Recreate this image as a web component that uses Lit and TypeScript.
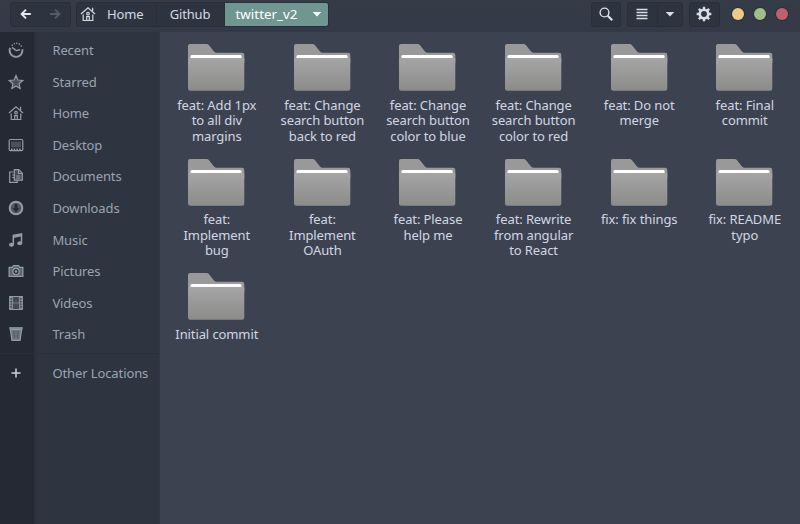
import { LitElement, html, svg, css } from "lit";
import { customElement, property } from "lit/decorators.js";

const house = svg`<path d="M1 8 8 1.8 15 8M3.2 8.6v5.9h9.6V8.6M12.6 5V1.8" /><path d="M6.7 14V10.6h2.6V14" /><circle cx="8" cy="7.7" r="1.3" />`;

const glyphs: Record<string, unknown> = {
  recent: svg`<path d="M2.2 5.8a6.4 6.4 0 1 0 12.1 1.4" stroke-width="1.9" /><path d="M4 5.4 8.2 8.6 12 7.8" stroke-width="1.4" /><path d="M4.3 3.2v.1M6.3 1.7v.1M8.8 1.2v.1M11.300 2v.1M13.2 4v.1" stroke-width="1.6" stroke-linecap="round" />`,
  starred: svg`<path d="M8 1.6 9.9 6l4.8.5-3.6 3.2 1 4.8L8 12l-4.1 2.5 1-4.8L1.3 6.5 6.1 6z" fill="currentColor" fill-opacity=".35" />`,
  home: house,
  desktop: svg`<rect x="1.2" y="2.5" width="13.6" height="11.2" rx="1.2" /><path d="M3 4.5h10v5.8H3z" fill="currentColor" stroke="none" opacity=".35" /><path d="M3 12.2h10" stroke-dasharray="1.5 1.2" stroke-width="1.5" />`,
  documents: svg`<path d="M5.5 4H1.7v10.3h7.6v-2M4.2 7h2.6M4.2 9.5h2.6" /><path d="M6.3 1.7h4.5l3.5 3.5v7H6.3z" fill="currentColor" fill-opacity=".3" /><path d="M10.5 1.7v3.8h3.8M8.2 8h4M8.2 10h4" />`,
  downloads: svg`<circle cx="8" cy="8" r="6.3" stroke-width="2" fill="currentColor" fill-opacity=".4" /><path d="M6.6 4h2.8v4h2.2L8 12.2 4.4 8h2.2z" fill="#242a34" stroke="none" />`,
  music: svg`<path d="M5.3 12.5V3.3l8.2-1.5v9" stroke-width="1.5" /><path d="M5 3.8 14 2v2.3L5 6z" fill="currentColor" stroke="none" /><ellipse cx="3.5" cy="12.8" rx="2.5" ry="2" fill="currentColor" stroke="none" /><ellipse cx="11.7" cy="11.3" rx="2.5" ry="2" fill="currentColor" stroke="none" />`,
  pictures: svg`<path d="M1.2 4.3h3L5.5 2.7h5l1.3 1.6h3v9H1.2z" fill="currentColor" fill-opacity=".5" stroke-width="1.3" /><circle cx="8" cy="8.5" r="3.2" fill="#242a34" stroke-width="1.3" /><circle cx="8" cy="8.5" r="1.3" fill="currentColor" stroke="none" />`,
  videos: svg`<path d="M1.7 1.7h12.6v12.6H1.7zM4.2 2v12M11.8 2v12M4.2 8h7.6" /><path d="M4.5 3h7v4h-7zM4.5 9h7v4h-7z" fill="currentColor" stroke="none" opacity=".3" /><path d="M2.7 2v12M13.3 2v12" stroke-dasharray="1.3 1.3" stroke-width="1.5" />`,
  trash: svg`<path d="M2.3 3.3h11.4l-1.7 11H4z" fill="currentColor" fill-opacity=".65" /><path d="M1.2 2h13.6" stroke-width="1.6" /><path d="M6 5l.5 7M10 5l-.5 7" stroke="#242a34" opacity=".35" />`,
  plus: svg`<path d="M8 3.5v9M3.5 8h9" stroke-width="1.5" />`,
  back: svg`<path d="M13.5 8H3.5M8 3 3 8l5 5" stroke-width="2.2" />`,
  forward: svg`<path d="M2.5 8h10M8 3l5 5-5 5" stroke-width="2.2" />`,
  down: svg`<path d="M3.7 6h8.6L8 10.5z" fill="currentColor" stroke="none" />`,
  search: svg`<circle cx="6.5" cy="6.5" r="4.4" stroke-width="1.4" /><path d="m9.7 9.7 4.5 4.5" stroke-width="2.2" />`,
  list: svg`<path d="M2.5 3.5h11M2.5 6.5h11M2.5 9.5h11M2.5 12.5h11" stroke-width="1.3" />`,
  gear: svg`<circle cx="8" cy="8" r="4.2" stroke-width="2.6" /><path d="M8 .7v2.5M8 12.8v2.5M.7 8h2.5M12.8 8h2.5M2.84 2.84l1.8 1.8M11.36 11.36l1.8 1.8M2.84 13.16l1.8-1.8M11.36 4.64l1.8-1.8" stroke-width="2.4" />`,
};

@customElement("file-glyph")
class FileGlyph extends LitElement {
  @property() name = "";
  static styles = css`
    :host { display: block; width: 16px; height: 16px; flex: none; }
    .icon { display: block; width: 100%; height: 100%; fill: none; stroke: currentColor; stroke-width: 1.2; }
  `;
  render() {
    return html`<svg class="icon" viewBox="0 0 16 16">${glyphs[this.name]}</svg>`;
  }
}

@customElement("folder-item")
class FolderItem extends LitElement {
  @property({ attribute: false }) lines: string[] = [];
  static styles = css`
    :host { display: flex; flex-direction: column; align-items: center; height: 114.6px; }
    .folder { display: block; width: 58px; height: 49px; margin-bottom: 5.7px; }
    .label { font-size: 13px; line-height: 15.4px; letter-spacing: -0.1px; padding-left: 1px; color: #d0d7e3; text-align: center; white-space: nowrap; }
    .line { display: block; }
  `;
  render() {
    return html`
      <svg class="folder" viewBox="0 0 58 49">
        <defs>
          <linearGradient id="front" x1="0" y1="0" x2="0" y2="1">
            <stop offset="0" stop-color="#a5a5a5" />
            <stop offset="1" stop-color="#8b8b8a" />
          </linearGradient>
        </defs>
        <path d="M1 3Q1 1 3 1H19.5Q21 1 22 2.3L27 8.5Q28 9.8 30 9.8H55Q57.3 9.8 57.3 12V20H1z" fill="#999" />
        <path d="M3.5 15V13.3Q3.5 12 5 12H53Q54.5 12 54.5 13.3V16H3.5z" fill="#fff" />
        <path d="M1 15.7Q1 14.9 2 14.9H56.3Q57.3 14.9 57.3 15.7V45.5Q57.3 47.8 55 47.8H3.3Q1 47.8 1 45.5z" fill="url(#front)" />
      </svg>
      <div class="label">${this.lines.map((l) => html`<span class="line">${l}</span>`)}</div>
    `;
  }
}

const places = [
  ["recent", "Recent"], ["starred", "Starred"], ["home", "Home"], ["desktop", "Desktop"],
  ["documents", "Documents"], ["downloads", "Downloads"], ["music", "Music"],
  ["pictures", "Pictures"], ["videos", "Videos"], ["trash", "Trash"],
];

const folders = [
  ["feat: Add 1px", "to all div", "margins"],
  ["feat: Change", "search button", "back to red"],
  ["feat: Change", "search button", "color to blue"],
  ["feat: Change", "search button", "color to red"],
  ["feat: Do not", "merge"],
  ["feat: Final", "commit"],
  ["feat:", "Implement", "bug"],
  ["feat:", "Implement", "OAuth"],
  ["feat: Please", "help me"],
  ["feat: Rewrite", "from angular", "to React"],
  ["fix: fix things"],
  ["fix: README", "typo"],
  ["Initial commit"],
];

@customElement("app-root")
class AppRoot extends LitElement {
  static styles = css`
    :host { display: flex; flex-direction: column; height: 524px; overflow: hidden; background: #3d4251; font-family: "Noto Sans", sans-serif; font-size: 13px; color: #d3dae3; }
    .header { display: flex; align-items: center; height: 32px; box-sizing: border-box; padding: 0 12.5px 3px 10px; background: linear-gradient(#353b47, #333946); flex: none; }
    .group { display: flex; height: 25px; box-sizing: border-box; border: 1px solid #292e38; border-radius: 3px; background: #2e343f; overflow: hidden; }
    .cell { display: flex; align-items: center; justify-content: center; box-sizing: border-box; padding-bottom: 1px; border-left: 1px solid #292e38; white-space: nowrap; }
    .cell:first-child { border-left: 0; }
    .nav { width: 61px; margin-right: 5px; }
    .nav .cell { flex: 1; border: 0; color: #e4e9f0; }
    .nav .off { color: #555c68; }
    .nav file-glyph { width: 14px; height: 14px; }
    .crumb-home { width: 79px; justify-content: flex-start; padding-left: 3px; gap: 11px; letter-spacing: -0.15px; }
    .crumb-mid { width: 69px; padding-right: 2px; letter-spacing: -0.15px; }
    .crumb-on { width: 104px; margin: -1px; gap: 12px; padding-left: 8px; background: #709692; color: #fff; font-size: 13.4px; }
    .path { width: 253px; font-size: 13px; }
    .spacer { flex: 1; }
    .tools { display: flex; gap: 6px; color: #d8dee8; }
    .find { width: 30px; }
    .find .cell, .prefs .cell { flex: 1; }
    .view { width: 56px; }
    .view .wide { width: 30px; }
    .view .narrow { width: 25px; }
    .prefs { width: 31px; }
    .dots { display: flex; gap: 10px; margin-left: 12.5px; align-items: center; }
    .dot { width: 11.8px; height: 11.8px; margin-bottom: 1px; border-radius: 50%; box-shadow: 0 0 0 1px #2c313d; }
    .yellow { background: #ecc987; }
    .green { background: #a0bd8a; }
    .red { background: #bd616c; }
    .body { display: flex; flex: 1; min-height: 0; }
    .sidebar { width: 160px; flex: none; box-sizing: border-box; padding-top: 2.2px; background: linear-gradient(90deg, #242933 34px, #2b303b 34px, #2e3440 38px); color: #9ba5b2; border-right: 1px solid #303643; }
    .place { display: flex; align-items: center; height: 31.6px; gap: 28.4px; padding-left: 8px; letter-spacing: -0.1px; }
    .place file-glyph { color: #929da8; }
    .other { margin-top: 3px; border-top: 1px solid #2a2f3a; padding-top: 3px; }
    .other file-glyph { color: #cbd2db; }
    .files { display: grid; grid-template-columns: repeat(6, 105.6px); grid-auto-rows: 114.6px; padding: 11px 0 0 3.5px; align-content: start; }
  `;
  render() {
    return html`
      <div class="header">
        <div class="group nav">
          <div class="cell"><file-glyph name="back"></file-glyph></div>
          <div class="cell off"><file-glyph name="forward"></file-glyph></div>
        </div>
        <div class="group path">
          <div class="cell crumb-home"><file-glyph name="home"></file-glyph><span>Home</span></div>
          <div class="cell crumb-mid">Github</div>
          <div class="cell crumb-on"><span>twitter_v2</span><file-glyph name="down"></file-glyph></div>
        </div>
        <div class="spacer"></div>
        <div class="tools">
          <div class="group find"><div class="cell"><file-glyph name="search"></file-glyph></div></div>
          <div class="group view">
            <div class="cell wide"><file-glyph name="list"></file-glyph></div>
            <div class="cell narrow"><file-glyph name="down"></file-glyph></div>
          </div>
          <div class="group prefs"><div class="cell"><file-glyph name="gear"></file-glyph></div></div>
        </div>
        <div class="dots"><div class="dot yellow"></div><div class="dot green"></div><div class="dot red"></div></div>
      </div>
      <div class="body">
        <div class="sidebar">
          ${places.map(([icon, label]) => html`<div class="place"><file-glyph name=${icon}></file-glyph><span>${label}</span></div>`)}
          <div class="place other"><file-glyph name="plus"></file-glyph><span>Other Locations</span></div>
        </div>
        <div class="files">${folders.map((lines) => html`<folder-item .lines=${lines}></folder-item>`)}</div>
      </div>
    `;
  }
}
